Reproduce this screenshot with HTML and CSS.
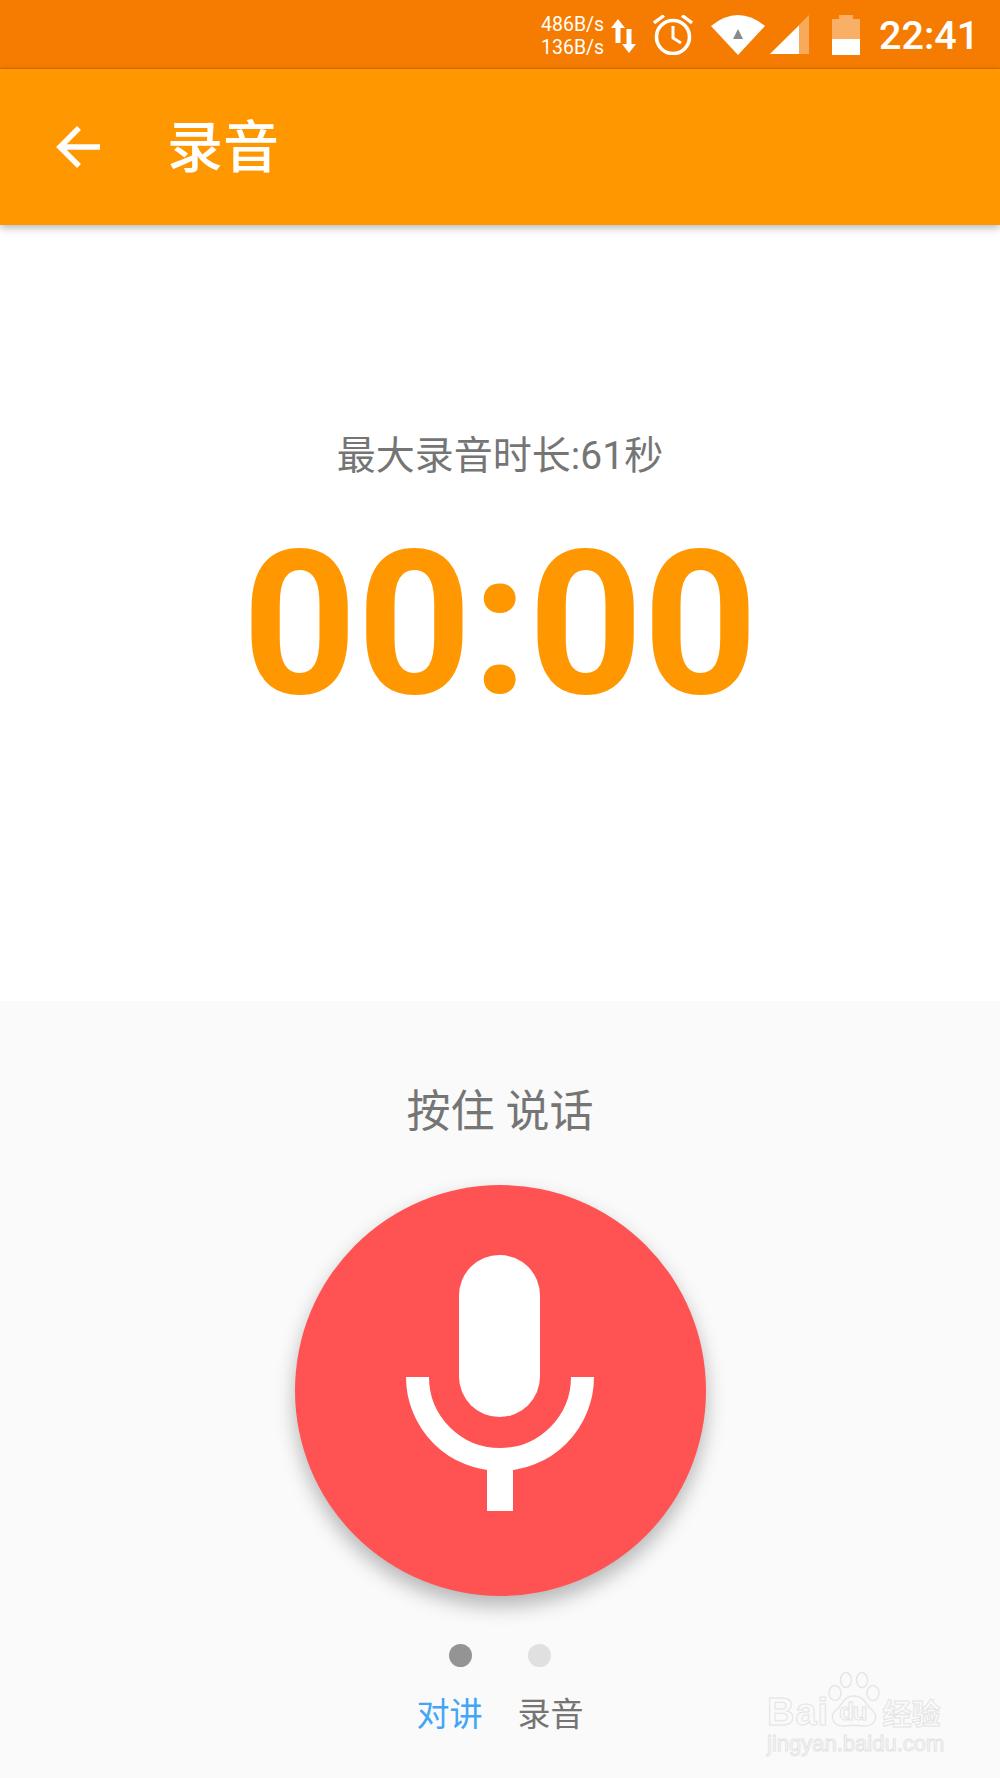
FILE: index.html
```html
<!DOCTYPE html>
<html>
<head>
    <meta charset="utf-8">
    <title>录音</title>
    <link rel="stylesheet" href="styles.css">
</head>
<body>
<div class="phone">
    <div class="status-bar">
        <div class="net-speed">
            <span>486B/s</span>
            <span>136B/s</span>
        </div>
        <svg class="ico-arrows" width="25" height="34" viewBox="0 0 25 34">
            <path d="M7 0 L14 9 L9.500 9 L9.500 24 L4.500 24 L4.500 9 L0 9 Z M18 34 L11 25 L15.500 25 L15.500 10 L20.500 10 L20.500 25 L25 25 Z" fill="#fff"/>
        </svg>
        <svg class="ico-alarm" width="40" height="40" viewBox="0 0 40 40">
            <circle cx="20" cy="22" r="16.500" fill="none" stroke="#fff" stroke-width="3.600"/>
            <path d="M20 11 V23 L28 28" fill="none" stroke="#fff" stroke-width="3"/>
            <path d="M1 8 L11 0.500 M39 8 L29 0.500" fill="none" stroke="#fff" stroke-width="3.400"/>
        </svg>
        <svg class="ico-wifi" width="54" height="40" viewBox="0 0 54 40">
            <path d="M0 11 Q27 -11 54 11 L27 40 Z" fill="#fff"/>
            <path d="M27 14 L32 24 L22 24 Z" fill="#8a8a8a"/>
        </svg>
        <svg class="ico-signal" width="39" height="40" viewBox="0 0 39 40">
            <path d="M39 0 V39 H0 Z" fill="#fff" fill-opacity="0.35"/>
            <path d="M29 10.500 V39 H0 Z" fill="#fff"/>
        </svg>
        <svg class="ico-battery" width="28" height="40" viewBox="0 0 28 40">
            <path d="M0 4 H7 V0 H21 V4 H28 V24 H0 Z" fill="#fff" fill-opacity="0.4"/>
            <rect x="0" y="24" width="28" height="16" fill="#fff"/>
        </svg>
        <span class="clock">22:41</span>
    </div>

    <div class="toolbar">
        <svg class="ico-back" width="46" height="46" viewBox="0 0 46 46">
            <path d="M44 22 H5 M23 3 L4 22 L23 41" fill="none" stroke="#fff" stroke-width="5.500"/>
        </svg>
        <span class="toolbar-title">录音</span>
    </div>

    <div class="record-info">
        <div class="max-time">最大录音时长:61秒</div>
        <div class="timer">00:00</div>
    </div>

    <div class="talk-panel">
        <div class="hold-label">按住 说话</div>
        <div class="mic-button">
            <svg width="188" height="256" viewBox="0 0 188 256">
                <rect x="53" y="0" width="81" height="162" rx="40.500" fill="#fff"/>
                <path d="M11.500 122 A82.500 82.500 0 0 0 176.500 122" fill="none" stroke="#fff" stroke-width="23"/>
                <rect x="81" y="195" width="26" height="61" fill="#fff"/>
            </svg>
        </div>
        <div class="dots">
            <span class="dot dot-on"></span>
            <span class="dot"></span>
        </div>
        <div class="tabs">
            <span class="tab tab-on">对讲</span>
            <span class="tab">录音</span>
        </div>

        <div class="watermark">
            <svg class="paw" width="52" height="56" viewBox="0 0 52 56">
                <g fill="#fafafa" stroke="#e6e6e6" stroke-width="1.500">
                    <ellipse cx="7" cy="21" rx="6" ry="7.500"/>
                    <ellipse cx="18" cy="8" rx="5.500" ry="7.500"/>
                    <ellipse cx="34" cy="8" rx="5.500" ry="7.500"/>
                    <ellipse cx="45" cy="21" rx="6" ry="7.500"/>
                    <path d="M26 24 C37 24 37 33 44 38 C52 45 46 55 35 54 C29 53 23 53 17 54 C6 55 0 45 8 38 C15 33 15 24 26 24 Z"/>
                </g>
            </svg>
            <div class="wm-row">
                <span class="wm-logo">Bai</span>
                <span class="wm-du">du</span>
                <span class="wm-cn">经验</span>
            </div>
            <div class="wm-url">jingyan.baidu.com</div>
        </div>
    </div>
</div>
</body>
</html>
```

FILE: styles.css
```css
* {
    box-sizing: border-box;
}

html, body {
    margin: 0;
    padding: 0;
    background: #fff;
}

.phone {
    width: 1000px;
    height: 1778px;
    display: flex;
    flex-direction: column;
    overflow: hidden;
    font-family: Roboto, "Noto Sans CJK SC", sans-serif;
}

.status-bar {
    height: 69px;
    flex: none;
    display: flex;
    align-items: center;
    padding: 2px 0 0 541px;
    background: #f57c00;
    border-bottom: 1px solid #d96e00;
    color: #fff;
}

.status-bar > * {
    flex: none;
}

.net-speed {
    width: 64px;
    display: flex;
    flex-direction: column;
    margin-top: 1px;
    font-size: 19.500px;
    line-height: 23px;
    white-space: nowrap;
}

.ico-arrows {
    margin-left: 6px;
    margin-top: 1px;
}

.ico-alarm {
    margin-left: 17px;
}

.ico-wifi {
    margin-left: 18px;
}

.ico-signal {
    margin-left: 5px;
}

.ico-battery {
    margin-left: 23px;
}

.clock {
    margin-left: 19px;
    margin-top: 1px;
    font-size: 39.500px;
    font-weight: 500;
}

.toolbar {
    position: relative;
    height: 156px;
    flex: none;
    display: flex;
    align-items: center;
    padding: 2px 0 0 56px;
    background: #ff9800;
    box-shadow: 0 3px 8px rgba(0, 0, 0, 0.28);
}

.toolbar-title {
    margin-left: 65px;
    color: #fff;
    font-size: 56px;
    font-weight: 500;
    line-height: 60px;
}

.record-info {
    height: 776px;
    flex: none;
    display: flex;
    flex-direction: column;
    align-items: center;
    padding-top: 203px;
    background: #fff;
}

.max-time {
    color: #757575;
    font-size: 39px;
    line-height: 56px;
}

.timer {
    margin-top: 24px;
    color: #ff9800;
    font-size: 200px;
    font-weight: 700;
    line-height: 234px;
}

.talk-panel {
    position: relative;
    flex: 1;
    display: flex;
    flex-direction: column;
    align-items: center;
    background: #fafafa;
}

.hold-label {
    margin-top: 82px;
    color: #757575;
    font-size: 44px;
    line-height: 58px;
}

.mic-button {
    width: 411px;
    height: 411px;
    margin-top: 44px;
    display: flex;
    justify-content: center;
    padding-top: 70px;
    border-radius: 50%;
    background: #ff5252;
    box-shadow: 0 10px 20px rgba(0, 0, 0, 0.28);
}

.dots {
    display: flex;
    gap: 56px;
    margin-top: 48px;
    margin-left: -1px;
}

.dot {
    width: 23px;
    height: 23px;
    border-radius: 50%;
    background: #e0e0e0;
}

.dot-on {
    background: #949494;
}

.tabs {
    display: flex;
    gap: 35px;
    margin-top: 28px;
}

.tab {
    color: #757575;
    font-size: 33px;
    line-height: 40px;
}

.tab-on {
    color: #42a5f5;
}

.watermark {
    position: absolute;
    left: 767px;
    top: 671px;
    width: 180px;
    height: 90px;
    color: transparent;
}

.paw {
    position: absolute;
    left: 61px;
    top: 0;
}

.wm-row {
    position: absolute;
    left: 0;
    top: 20px;
    display: flex;
    align-items: baseline;
    font-family: "Liberation Sans", sans-serif;
    font-weight: 700;
    line-height: 40px;
    -webkit-text-stroke: 1px #e4e4e4;
}

.wm-logo {
    font-size: 38px;
    letter-spacing: 1px;
}

.wm-du {
    position: relative;
    top: -5px;
    margin-left: 10px;
    font-size: 24px;
    letter-spacing: -1px;
}

.wm-cn {
    margin-left: 16px;
    font-family: "Noto Sans CJK SC", sans-serif;
    font-size: 29px;
}

.wm-url {
    position: absolute;
    left: 0;
    top: 60px;
    font-family: "Liberation Sans", sans-serif;
    font-size: 22px;
    line-height: 24px;
    white-space: nowrap;
    -webkit-text-stroke: 1px #e4e4e4;
}
```
